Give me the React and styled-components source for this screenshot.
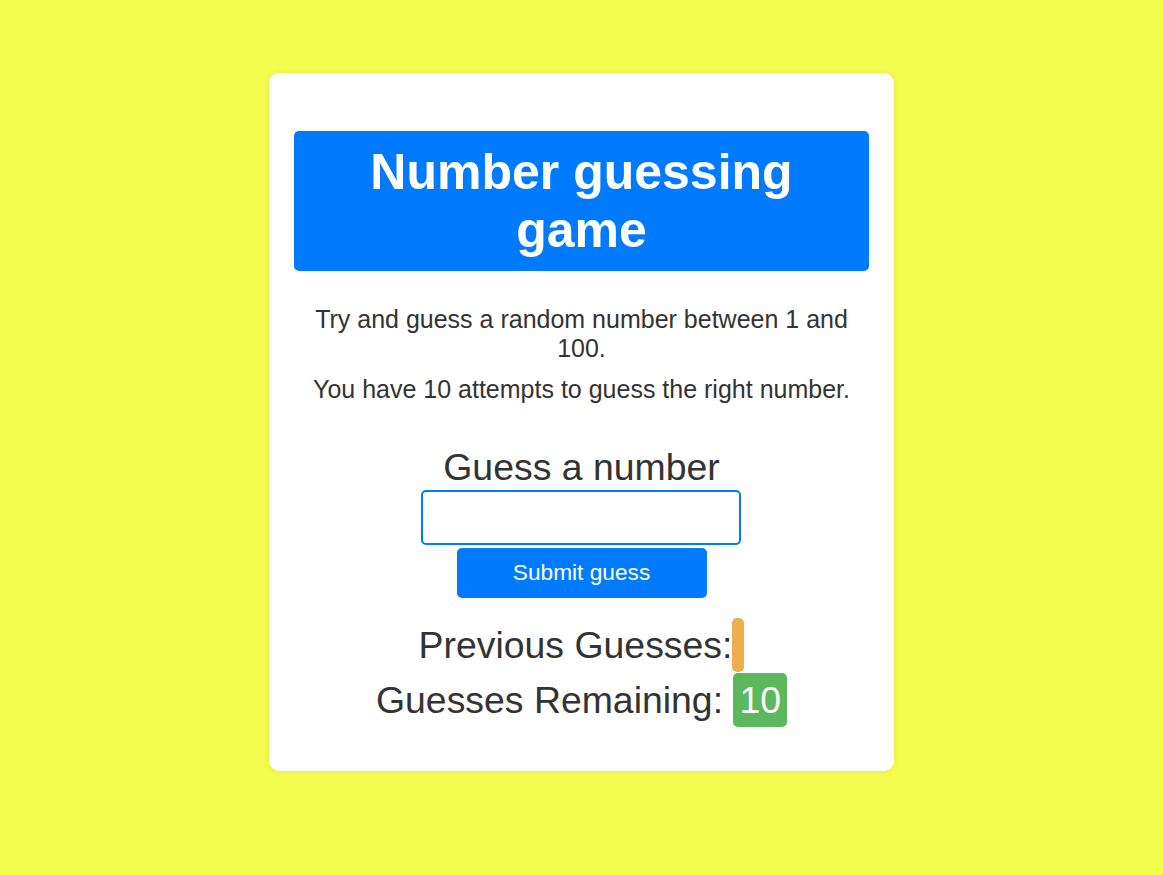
import React, { useState } from 'react'
import styled, { createGlobalStyle } from 'styled-components'

const GlobalStyle = createGlobalStyle`
  html, body {
    margin:0;
    padding:0;
  }
  body {
    background-color:#f2fc4f;
    font-family:"Liberation Sans", Arial, sans-serif;
    color:#333;
    min-height:875px;
  }
`

const App = () => {
  const [guess, setGuess] = useState('')
  const [previous] = useState([])
  const remaining = 10

  return (
    <>
      <GlobalStyle />
      <Card>
        <Title>Number guessing game</Title>
        <Intro>Try and guess a random number between 1 and 100.</Intro>
        <Intro $gap>You have 10 attempts to guess the right number.</Intro>
        <Label htmlFor="guessField">Guess a number</Label>
        <GuessInput
          id="guessField"
          type="text"
          value={guess}
          onChange={(e) => setGuess(e.target.value)}
        />
        <SubmitBut type="button">Submit guess</SubmitBut>
        <Results>
          <ResultRow>
            Previous Guesses:<Badge $color="#f0ad4e">{previous.join(' ')}</Badge>
          </ResultRow>
          <ResultRow>
            Guesses Remaining: <Badge $color="#5cb85c">{remaining}</Badge>
          </ResultRow>
        </Results>
      </Card>
    </>
  )
}

export default App

const Card = styled.div`
  width:625px;
  box-sizing:border-box;
  margin:73px auto 0;
  padding:25px;
  background-color:white;
  border-radius:10px;
  box-shadow:0 0 6px rgba(0,0,0,0.08);
  display:flex;
  flex-direction:column;
  align-items:center;
  text-align:center;
`
const Title = styled.h1`
  align-self:stretch;
  margin:33px 0 0;
  padding:13px 12px 12px;
  background-color:#007bff;
  color:white;
  font-size:50px;
  line-height:57.5px;
  font-weight:700;
  border-radius:5px;
`
const Intro = styled.p`
  margin:${(p) => (p.$gap ? '12px' : '34px')} 0 0;
  font-size:25px;
  line-height:28.8px;
`
const Label = styled.label`
  display:block;
  margin-top:44px;
  font-size:37.4px;
  line-height:41.4px;
`
const GuessInput = styled.input`
  width:320px;
  height:55px;
  box-sizing:border-box;
  margin-top:1px;
  margin-right:2px;
  border:2px solid #007bff;
  border-radius:5px;
  font-size:24px;
  font-family:inherit;
  text-align:center;
  outline:none;
`
const SubmitBut = styled.button`
  width:250px;
  height:50px;
  margin-top:3px;
  border:0;
  border-radius:5px;
  background-color:#007bff;
  color:white;
  font-family:inherit;
  font-size:22.7px;
  cursor:pointer;
`
const Results = styled.div`
  margin-top:20px;
  margin-bottom:18px;
`
const ResultRow = styled.div`
  font-size:37.4px;
  line-height:55px;
  white-space:nowrap;
`
const Badge = styled.span`
  padding:6px;
  background-color:${(p) => p.$color};
  color:white;
  border-radius:5px;
`
